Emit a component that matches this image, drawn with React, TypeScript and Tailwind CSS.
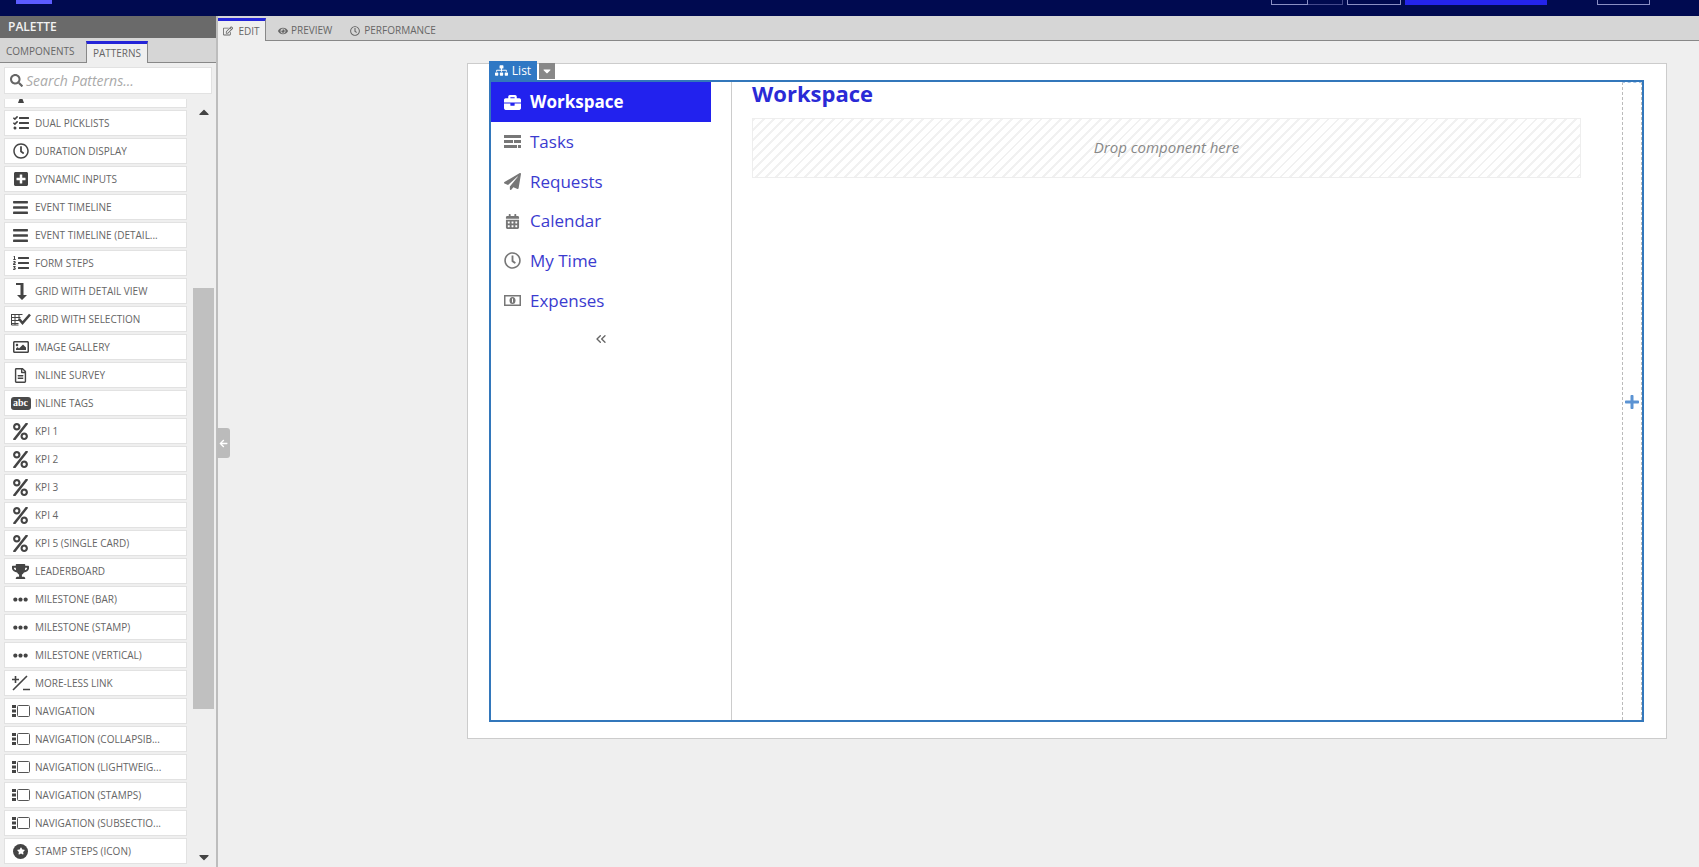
import type { ReactNode } from 'react';
import {
  FaArrowLeft,
  FaBars,
  FaBriefcase,
  FaCalendarAlt,
  FaCaretDown,
  FaCaretUp,
  FaEllipsisH,
  FaEye,
  FaListOl,
  FaPaperPlane,
  FaPercent,
  FaPlus,
  FaPlusSquare,
  FaRegClock,
  FaRegEdit,
  FaRegFileAlt,
  FaRegImage,
  FaSearch,
  FaSitemap,
  FaStar,
  FaTasks,
  FaTrophy,
} from 'react-icons/fa';
import { ChevronsLeft } from 'lucide-react';

function LevelDownIcon() {
  return (
    <svg width="14" height="18" viewBox="0 0 14 18" fill="#444">
      <path d="M2 1h7.500v12H13l-5 5-5-5h3.500V3H2z" />
    </svg>
  );
}

function GridCheckIcon() {
  return (
    <svg width="20" height="13" viewBox="0 0 20 13" fill="none" stroke="#444">
      <path d="M.5 1.500h11M.5 4.500h9M.5 7.500h8M.5 10.500h7M.5 1v11h7M4 1v11M8 1v7" />
      <path d="M8 6l3.500 4L19 1.500" strokeWidth="2.600" />
    </svg>
  );
}

function MoreLessIcon() {
  return (
    <svg width="20" height="16" viewBox="0 0 20 16" fill="none" stroke="#444" strokeWidth="1.600">
      <path d="M1 4.500h7M4.500 1v7M2 15L16 1M12 14.500h7" />
    </svg>
  );
}

function NavigationIcon() {
  return (
    <svg width="18" height="12" viewBox="0 0 18 12">
      <path d="M0 0h4v3H0zM0 4.500h4v3H0zM0 9h4v3H0z" fill="#444" />
      <rect x="5.500" y=".5" width="12" height="11" rx="1" fill="none" stroke="#555" />
    </svg>
  );
}

function AbcBadge() {
  return (
    <span className="flex h-[13px] w-[20px] items-center justify-center rounded-[3px] bg-[#4a4a4a] font-['Liberation_Serif',serif] text-[10px] font-bold leading-none text-white">
      abc
    </span>
  );
}

function StampIcon() {
  return (
    <span className="flex h-[15px] w-[15px] items-center justify-center rounded-full bg-[#444]">
      <FaStar className="text-[8px] text-white" />
    </span>
  );
}

// only the foot of this icon shows, the row is scrolled under the search box
function ClippedIcon() {
  return (
    <svg width="16" height="16" viewBox="0 0 16 16" fill="#444">
      <path d="M5 16l1.500-4h3L11 16z" />
    </svg>
  );
}

// fa-tasks from the older icon set: three bars with a split near the right end
function TaskBarsIcon() {
  return (
    <svg width="17" height="13" viewBox="0 0 17 13" fill="#777">
      <path d="M0 0h17v3H0zM0 5h9v3H0zM10 5h7v3h-7zM0 10h13v3H0zM14 10h3v3h-3z" />
    </svg>
  );
}

function MoneyIcon() {
  return (
    <svg width="17" height="11" viewBox="0 0 17 11">
      <rect x=".75" y=".75" width="15.500" height="9.500" fill="#fff" stroke="#777" strokeWidth="1.500" />
      <ellipse cx="8.500" cy="5.500" rx="3" ry="3.500" fill="#777" />
      <path d="M8.500 3.500v4" stroke="#fff" />
    </svg>
  );
}

const percent = <FaPercent className="text-[17px]" />;
const nav = <NavigationIcon />;
const dots = <FaEllipsisH className="text-[15px]" />;
const bars = <FaBars className="text-[17px]" />;

const patterns: { label: string; icon: ReactNode }[] = [
  { label: '', icon: <ClippedIcon /> },
  { label: 'DUAL PICKLISTS', icon: <FaTasks className="text-[16px]" /> },
  { label: 'DURATION DISPLAY', icon: <FaRegClock className="text-[16px]" /> },
  { label: 'DYNAMIC INPUTS', icon: <FaPlusSquare className="text-[16px]" /> },
  { label: 'EVENT TIMELINE', icon: bars },
  { label: 'EVENT TIMELINE (DETAIL...', icon: bars },
  { label: 'FORM STEPS', icon: <FaListOl className="text-[16px]" /> },
  { label: 'GRID WITH DETAIL VIEW', icon: <LevelDownIcon /> },
  { label: 'GRID WITH SELECTION', icon: <GridCheckIcon /> },
  { label: 'IMAGE GALLERY', icon: <FaRegImage className="text-[16px]" /> },
  { label: 'INLINE SURVEY', icon: <FaRegFileAlt className="text-[15px]" /> },
  { label: 'INLINE TAGS', icon: <AbcBadge /> },
  { label: 'KPI 1', icon: percent },
  { label: 'KPI 2', icon: percent },
  { label: 'KPI 3', icon: percent },
  { label: 'KPI 4', icon: percent },
  { label: 'KPI 5 (SINGLE CARD)', icon: percent },
  { label: 'LEADERBOARD', icon: <FaTrophy className="text-[17px]" /> },
  { label: 'MILESTONE (BAR)', icon: dots },
  { label: 'MILESTONE (STAMP)', icon: dots },
  { label: 'MILESTONE (VERTICAL)', icon: dots },
  { label: 'MORE-LESS LINK', icon: <MoreLessIcon /> },
  { label: 'NAVIGATION', icon: nav },
  { label: 'NAVIGATION (COLLAPSIB...', icon: nav },
  { label: 'NAVIGATION (LIGHTWEIG...', icon: nav },
  { label: 'NAVIGATION (STAMPS)', icon: nav },
  { label: 'NAVIGATION (SUBSECTIO...', icon: nav },
  { label: 'STAMP STEPS (ICON)', icon: <StampIcon /> },
];

const navItems: { label: string; icon: ReactNode; active?: boolean }[] = [
  { label: 'Workspace', icon: <FaBriefcase className="text-[17px]" />, active: true },
  { label: 'Tasks', icon: <TaskBarsIcon /> },
  { label: 'Requests', icon: <FaPaperPlane className="text-[17px]" /> },
  { label: 'Calendar', icon: <FaCalendarAlt className="text-[15px]" /> },
  { label: 'My Time', icon: <FaRegClock className="text-[17px]" /> },
  { label: 'Expenses', icon: <MoneyIcon /> },
];

function TopBar() {
  return (
    <div className="flex h-4 shrink-0 items-start bg-[#000a50]">
      <div className="ml-4 h-1 w-9 bg-[#5c5cff]" />
      <div className="ml-auto flex items-start">
        <div className="h-[5px] w-[37px] border border-t-0 border-[#8a8fc4]" />
        <div className="h-[5px] w-[35px] border border-t-0 border-l-0 border-[#454a8c]" />
        <div className="ml-1 h-[5px] w-[54px] border border-t-0 border-[#8a8fc4]" />
        <div className="ml-1 h-[5px] w-[142px] bg-[#2424ea]" />
        <div className="ml-[50px] mr-[49px] h-[5px] w-[53px] border border-t-0 border-[#8a8fc4]" />
      </div>
    </div>
  );
}

function PatternRow({ label, icon }: { label: string; icon: ReactNode }) {
  return (
    <div className="mb-[2px] flex h-[26px] w-[183px] shrink-0 items-center border border-[#e2e2e2] bg-white">
      <div className="flex w-[30px] shrink-0 items-center justify-center pl-[1px] text-[#444]">{icon}</div>
      <span className="whitespace-nowrap text-[10px] leading-[14px] text-[#666]">{label}</span>
    </div>
  );
}

function Palette() {
  return (
    <div className="flex w-[218px] shrink-0 flex-col border-r-2 border-[#bdbdbd] bg-[#efefef]">
      <div className="flex h-[22px] shrink-0 items-center bg-[#6a6a6a] pl-2 text-[12px] font-semibold text-[#f2f2f2]">
        PALETTE
      </div>
      <div className="flex h-[25px] shrink-0 items-end border-b border-[#888] bg-[#d6d6d6] text-[10px] text-[#666]">
        <div className="flex h-[21px] w-[80px] items-center pl-[6px]">COMPONENTS</div>
        <div className="mb-[-1px] ml-[6px] flex h-[22px] w-[62px] items-center justify-center border-x border-t-[3px] border-x-[#888] border-t-[#2424d8] bg-[#efefef]">
          PATTERNS
        </div>
      </div>
      <div className="mx-1 mt-1 flex h-[27px] w-[208px] shrink-0 items-center border border-[#e2e2e2] bg-white pl-[5px]">
        <FaSearch className="text-[13px] text-[#666]" />
        <span className="ml-[3px] text-[14px] italic text-[#aaa]">Search Patterns...</span>
      </div>
      <div className="mt-[5px] flex min-h-0 flex-1 overflow-hidden">
        <div className="ml-1 mt-[-17px] flex w-[183px] shrink-0 flex-col">
          {patterns.map((item, index) => (
            <PatternRow key={index} label={item.label} icon={item.icon} />
          ))}
        </div>
        <div className="ml-[6px] flex w-[21px] shrink-0 flex-col items-center">
          <FaCaretUp className="mt-[5px] text-[16px] text-[#444]" />
          <div className="mt-[168px] h-[421px] w-full bg-[#c0c0c0]" />
          <FaCaretDown className="mt-[140px] text-[16px] text-[#444]" />
        </div>
      </div>
    </div>
  );
}

function EditorTabs() {
  return (
    <div className="flex h-[25px] shrink-0 items-end border-b border-[#888] bg-[#d6d6d6] text-[10px] text-[#666]">
      <div className="mb-[-1px] flex h-[23px] w-[48px] items-center justify-center gap-[5px] border-r border-t-[3px] border-r-[#888] border-t-[#2424d8] bg-[#efefef]">
        <FaRegEdit className="text-[10px]" />
        EDIT
      </div>
      <div className="ml-[12px] flex h-[22px] items-center gap-[3px] pt-[3px]">
        <FaEye className="text-[10px]" />
        PREVIEW
      </div>
      <div className="ml-[18px] flex h-[22px] items-center gap-[4px] pt-[3px]">
        <FaRegClock className="text-[10px]" />
        PERFORMANCE
      </div>
    </div>
  );
}

function SideNav() {
  return (
    <div className="flex w-[241px] shrink-0 flex-col border-r border-[#ccc]">
      {navItems.map((item) => (
        <div
          key={item.label}
          className={
            item.active
              ? 'flex h-[40px] w-[220px] items-center bg-[#2222ee] text-[17px] font-bold text-white'
              : 'flex h-[39.700px] w-[220px] items-center text-[17px] text-[#3b3bcf]'
          }
        >
          <div className={item.active ? 'flex w-[39px] justify-center pl-[4px]' : 'flex w-[39px] justify-center pl-[4px] text-[#777]'}>
            {item.icon}
          </div>
          <span>{item.label}</span>
        </div>
      ))}
      <div className="mt-[11px] flex w-[220px] justify-center text-[#666]">
        <ChevronsLeft size={16} strokeWidth={2} />
      </div>
    </div>
  );
}

export default function App() {
  return (
    <div className="flex h-[867px] w-[1699px] flex-col overflow-hidden bg-[#efefef] font-['Open_Sans',sans-serif]">
      <TopBar />
      <div className="relative flex min-h-0 flex-1">
        <Palette />
        <div className="absolute left-[217px] top-[412px] flex h-[30px] w-[13px] items-center justify-center rounded-r-[3px] bg-[#bbb]">
          <FaArrowLeft className="text-[9px] text-white" />
        </div>
        <div className="flex min-w-0 flex-1 flex-col">
          <EditorTabs />
          <div className="ml-[249px] mt-[22px] h-[676px] w-[1200px] border border-[#ccc] bg-white pb-4 pl-[21px] pr-[22px] pt-4">
            <div className="relative flex h-full border-2 border-[#3377bb]">
              <div className="absolute left-[-2px] top-[-21px] flex h-[19px] items-center gap-[5px]">
                <div className="flex h-[19px] w-[48px] items-center justify-center gap-[4px] bg-[#2f78c4] text-[12px] text-white">
                  <FaSitemap className="text-[13px]" />
                  List
                </div>
                <div className="ml-[-3px] flex h-[16px] w-[16px] items-center justify-center bg-[#888] text-white">
                  <FaCaretDown className="text-[12px]" />
                </div>
              </div>
              <SideNav />
              <div className="min-w-0 flex-1 pl-5">
                <div className="mt-[-4px] text-[22px] font-bold leading-[30px] text-[#2a2ad6]">Workspace</div>
                <div className="mt-[10px] flex h-[60px] w-[829px] items-center justify-center border border-[#eee] bg-[repeating-linear-gradient(135deg,#f1f1f1_0,#f1f1f1_2px,#fff_2px,#fff_7px)] pb-[2px] text-[15px] italic text-[#888]">
                  Drop component here
                </div>
              </div>
              <div className="flex w-[20px] shrink-0 items-center justify-center border-x border-t border-dashed border-x-[#bbb] border-t-[#a9c6e6] pr-[1px] text-[#5b93d3]">
                <FaPlus className="text-[16px]" />
              </div>
            </div>
          </div>
        </div>
      </div>
    </div>
  );
}
